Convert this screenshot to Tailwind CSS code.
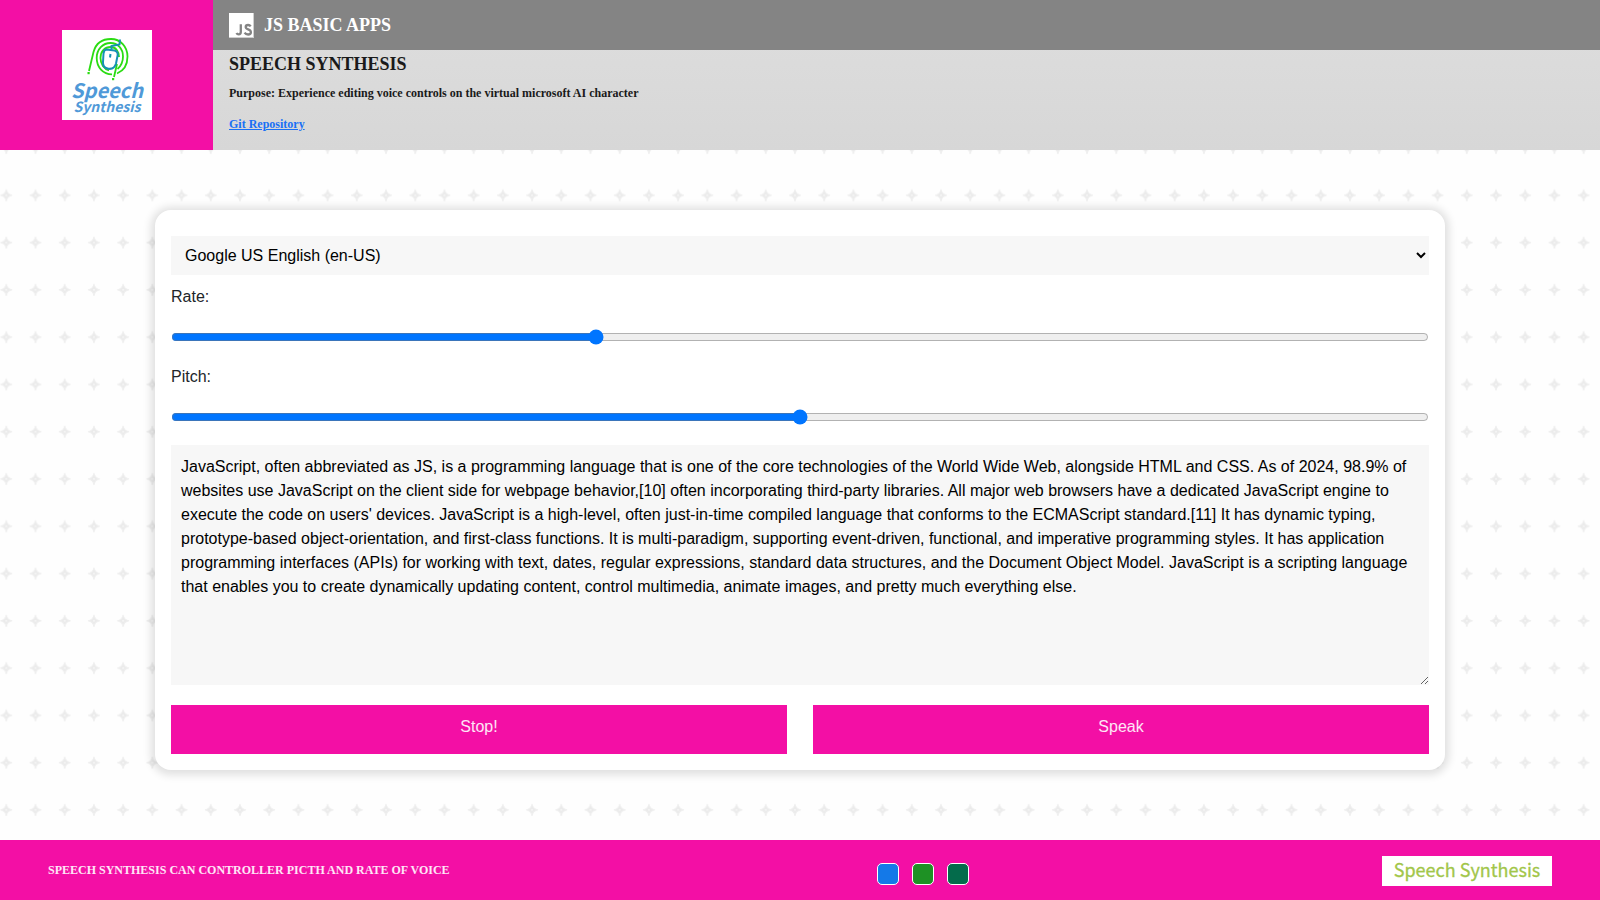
<!DOCTYPE html>
<html lang="en">
<head>
<meta charset="utf-8">
<meta name="viewport" content="width=device-width, initial-scale=1">
<title>Speech Synthesis</title>
<script src="https://cdn.jsdelivr.net/npm/@tailwindcss/browser@4"></script>
</head>
<body class="relative isolate flex min-h-screen flex-col bg-[#fefefe] font-['Liberation_Sans',Arial,sans-serif] text-base text-[#212529]">

<!-- Star pattern behind the page -->
<svg class="absolute inset-0 -z-10 h-full w-full" aria-hidden="true">
  <defs>
    <pattern id="stars" width="29.21" height="47.28" x="-8.3" y="29" patternUnits="userSpaceOnUse">
      <path d="M14.6 17.6 Q15.4 22.7 20.5 23.6 Q15.4 24.5 14.6 29.6 Q13.8 24.5 8.7 23.6 Q13.8 22.7 14.6 17.6Z" transform="translate(0 .9)" fill="#ebebeb" stroke="#efefef" stroke-width="1"/>
      <circle cx="14.6" cy="24.5" r="0.9" fill="#f8f8f8"/>
    </pattern>
  </defs>
  <rect width="100%" height="100%" fill="url(#stars)"/>
</svg>

<header class="flex h-[150px] font-['Liberation_Serif','Times_New_Roman',serif] font-bold">
  <div class="flex w-[213px] shrink-0 items-center justify-center bg-[#f30fa5]">
    <svg class="h-[90px] w-[90px]" viewBox="0 0 90 90" role="img" aria-label="Speech Synthesis logo">
      <rect width="90" height="90" fill="#fff"/>
      <g fill="none" stroke="#2bdc12" stroke-width="1.8">
        <path d="M27 41 L31.5 22 C34 13 41 9 49 9 C58.5 9 65.500 17 65.500 26.500 C65.500 35.500 61 41 55 43.500"/>
        <path d="M50 44.300 C41 44.300 34.700 37 34.700 28 C34.700 19 41 13 48.500 13 C56 13 61 19 61 26.500 C61 32 59 36 55.500 39"/>
        <path d="M47 40.300 C42 39 38.500 34 38.500 28 C38.500 21 43 17 48.500 17 C54 17 57 21.500 57 27 M55 34 L52 47"/>
      </g>
      <rect x="25.500" y="42" width="2.200" height="2.200" fill="#2bdc12"/>
      <rect x="50" y="48" width="2.200" height="2.200" fill="#2bdc12"/>
      <path d="M44.500 19.500 L52.500 20.500 Q56 21.500 55.700 25 L54 33.500 Q52.500 39.500 46.500 38.800 Q40.500 38 41 32 L41.500 23.500 Q42 19.600 44.500 19.500Z" fill="#fff" stroke="#1590b5" stroke-width="2"/>
      <path d="M49.500 19.500 V16 L57.500 14.500 L58 9.500 M48.500 24 L48 27.500" fill="none" stroke="#1590b5" stroke-width="2"/>
      <text x="45" y="68" text-anchor="middle" font-family="Noto Sans CJK SC, sans-serif" font-size="20" font-weight="700" font-style="italic" fill="#4f99d8">Speech</text>
      <text x="45" y="82" text-anchor="middle" font-family="Noto Sans CJK SC, sans-serif" font-size="14" font-weight="700" font-style="italic" fill="#4f99d8">Synthesis</text>
    </svg>
  </div>
  <div class="flex min-w-0 flex-1 flex-col bg-linear-to-b from-[#dedede] to-[#d7d7d7]">
    <div class="flex h-[50px] shrink-0 items-center gap-[10px] bg-[#848484] px-4 text-white">
      <svg class="h-[25px] w-[25px]" viewBox="0 0 25 25" aria-hidden="true">
        <rect width="25" height="25" fill="#cfcfcf"/>
        <rect width="24" height="24" fill="#fff"/>
        <path d="M11.800 11.200 V19 Q11.800 21.300 9.700 21.300 Q8.200 21.300 7.500 20 M21.700 13.300 Q20.800 12 19.100 12 Q16.700 12 16.700 14 Q16.700 15.500 19.200 16.400 Q21.900 17.400 21.900 19.200 Q21.900 21.500 19.100 21.500 Q16.700 21.500 15.600 19.700" fill="none" stroke="#848484" stroke-width="2.300"/>
      </svg>
      <h1 class="text-lg/6">JS BASIC APPS</h1>
    </div>
    <div class="flex flex-col items-start px-4 text-xs/4 text-[#1a1a1a]">
      <h2 class="text-lg/7">SPEECH SYNTHESIS</h2>
      <p class="mt-[7px]">Purpose: Experience editing voice controls on the virtual microsoft AI character</p>
      <a href="#" class="mt-[15px] text-[#1a70f5] underline">Git Repository</a>
    </div>
  </div>
</header>

<main class="flex flex-1 justify-center px-4 pt-[60px] pb-[70px]">
  <form class="flex w-full max-w-[1290px] flex-col rounded-2xl bg-white px-4 pt-[26px] pb-4 shadow-[0_1px_8px_4px_rgba(0,0,0,0.12)]">
    <select aria-label="Voice" class="h-[39px] w-full bg-[#f7f7f7] px-[10px] text-black">
      <option>Google US English (en-US)</option>
    </select>
    <label for="rate" class="mt-[10px]">Rate:</label>
    <input id="rate" type="range" min="0" max="125" value="42" class="mx-0 mt-5 h-4 w-full">
    <label for="pitch" class="mt-5">Pitch:</label>
    <input id="pitch" type="range" min="0" max="2" step="0.1" value="1" class="mx-0 mt-5 h-4 w-full">
    <textarea aria-label="Text to speak" spellcheck="false" class="mt-5 h-[240px] w-full resize bg-[#f7f7f7] p-[10px] text-black">JavaScript, often abbreviated as JS, is a programming language that is one of the core technologies of the World Wide Web, alongside HTML and CSS. As of 2024, 98.9% of websites use JavaScript on the client side for webpage behavior,[10] often incorporating third-party libraries. All major web browsers have a dedicated JavaScript engine to execute the code on users' devices. JavaScript is a high-level, often just-in-time compiled language that conforms to the ECMAScript standard.[11] It has dynamic typing, prototype-based object-orientation, and first-class functions. It is multi-paradigm, supporting event-driven, functional, and imperative programming styles. It has application programming interfaces (APIs) for working with text, dates, regular expressions, standard data structures, and the Document Object Model. JavaScript is a scripting language that enables you to create dynamically updating content, control multimedia, animate images, and pretty much everything else.</textarea>
    <div class="mt-5 grid grid-cols-2 gap-[26px] text-white/90">
      <button type="button" class="bg-[#f30fa5] pt-[10px] pb-[15px]">Stop!</button>
      <button type="button" class="bg-[#f30fa5] pt-[10px] pb-[15px]">Speak</button>
    </div>
  </form>
</main>

<footer class="flex h-[60px] items-center justify-between bg-[#f30fa5] px-12 font-['Liberation_Serif','Times_New_Roman',serif]">
  <p class="min-w-[415px] text-xs/4 font-bold text-white/90">SPEECH SYNTHESIS CAN CONTROLLER PICTH AND RATE OF VOICE</p>
  <div class="flex gap-[13px] pt-2">
    <button type="button" aria-label="Blue theme" class="h-[22px] w-[22px] rounded-[5px] border border-white bg-[#1479e8]"></button>
    <button type="button" aria-label="Green theme" class="h-[22px] w-[22px] rounded-[5px] border border-white bg-[#1e9124]"></button>
    <button type="button" aria-label="Teal theme" class="h-[22px] w-[22px] rounded-[5px] border border-white bg-[#046b4b]"></button>
  </div>
  <svg class="mt-0.5 h-[30px] w-[170px]" viewBox="0 0 170 30" role="img" aria-label="Speech Synthesis">
    <rect width="170" height="30" fill="#fff"/>
    <text x="85" y="21" text-anchor="middle" font-family="Noto Sans CJK SC, sans-serif" font-size="18" fill="#a2c64a" stroke="#a2c64a" stroke-width="0.3">Speech Synthesis</text>
  </svg>
</footer>
</body>
</html>
